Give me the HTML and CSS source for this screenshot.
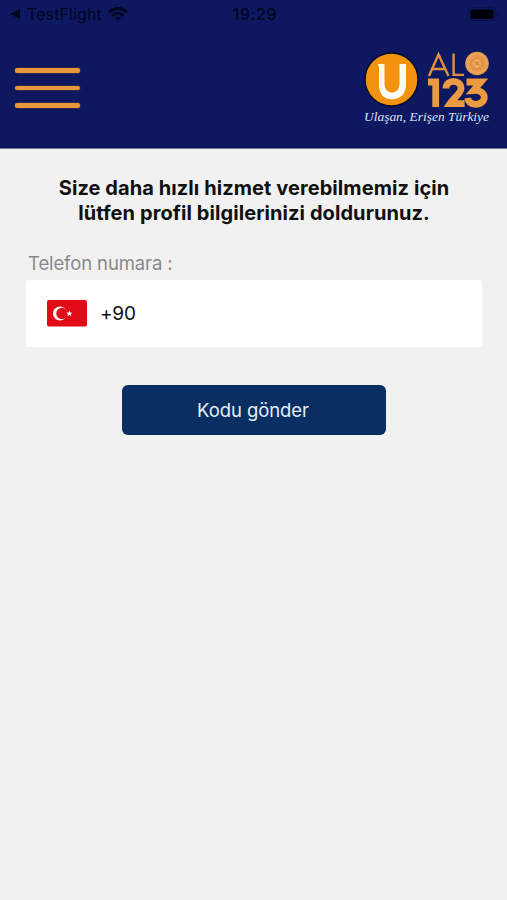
FILE: index.html
```html
<!DOCTYPE html>
<html lang="tr">
<head>
<meta charset="utf-8">
<meta name="viewport" content="width=device-width">
<title>Alo 123</title>
<link rel="stylesheet" href="styles.css">
</head>
<body>
<header class="header">
  <div class="status">
    <div class="status-left">
      <svg width="11" height="10" viewBox="0 0 11 10"><path d="M0 5 10 0v10z" fill="#02051f"/></svg>
      <span class="back">TestFlight</span>
      <svg class="wifi" width="20" height="14" viewBox="0 0 20 14" fill="none" stroke="#02051f" stroke-width="2.8"><path d="M1 5.2Q10-2.7 19 5.2M4.2 8.6q5.8-5 11.6 0"/><path d="M10 13.8 6.8 10.9q3.2-2.5 6.4 0z" fill="#02051f" stroke="none"/></svg>
    </div>
    <span class="time">19:29</span>
    <svg class="battery" width="32" height="15" viewBox="0 0 32 15"><rect x=".7" y=".7" width="27" height="13" rx="4" fill="none" stroke="#0a1144"/><rect x="2.5" y="2.5" width="23" height="9.5" rx="2" fill="#010207"/><path d="M29.5 5q2 2 0 4z" fill="#0a1144"/></svg>
  </div>
  <div class="bar">
    <div class="menu"><i></i><i></i><i></i></div>
    <svg class="logo" width="134" height="80" viewBox="360 48 134 80">
      <circle cx="391.5" cy="79.5" r="26.5" fill="#f2920f" stroke="#0b0b25" stroke-width="1.5"/>
      <path d="M377.5 64H384.5V84.5A7.5 8.3 0 0 0 399.5 84.5V64H406V84.5C406 94 400.5 99.3 392 99.3S379 94 379 84.5V66.5Z" fill="#fffdf5"/>
      <g fill="none" stroke="#df913f" stroke-width="2.4"><path d="M429 76 438.5 54.5 448.5 76M432.5 69h12.5M453.6 53.5v21.4H464"/></g>
      <circle cx="477" cy="63.5" r="11.8" fill="#e79a4c"/>
      <g fill="none" stroke="#f5bd7d"><circle cx="477" cy="63.5" r="9.4" stroke-width="1" stroke-dasharray="1.5 1"/><circle cx="477" cy="63.5" r="6" stroke="#d98a40"/><circle cx="477" cy="63.5" r="3.2"/></g>
      <path d="m474 61.5 6 4m-5.5.5 5-5" stroke="#ca7932" stroke-width=".8"/>
      <g fill="none" stroke="#ec9a40" stroke-width="6.8"><path d="M428 82h7.7v25"/><path d="M446 88.5c0-9.5 15-9.5 15 0 0 4.5-6.5 8.5-11 15.2h14.6"/><path d="M466.5 82h14.3l-7.3 8.5c14.5-1 13.5 13.8 2 13.8-4.5 0-7.2-2.3-7.8-6.2"/></g>
      <text class="slogan" x="364" y="121" textLength="125" lengthAdjust="spacingAndGlyphs">Ulaşan, Erişen Türkiye</text>
    </svg>
  </div>
</header>
<main class="content">
  <h1>Size daha hızlı hizmet verebilmemiz için<br>lütfen profil bilgilerinizi doldurunuz.</h1>
  <div class="label">Telefon numara :</div>
  <div class="field">
    <svg width="40" height="27" viewBox="0 0 40 27"><rect width="40" height="26.5" rx="2" fill="#e30a17"/><circle cx="13" cy="13.5" r="7" fill="#fff"/><circle cx="15" cy="13.5" r="5.7" fill="#e30a17"/><path d="m22.3 10.5.9 2 2.2.2-1.7 1.4.6 2.2-2-1.2-1.9 1.2.5-2.2-1.7-1.4 2.3-.2z" fill="#fff"/></svg>
    <span class="code">+90</span>
  </div>
  <button class="send">Kodu gönder</button>
</main>
</body>
</html>
```
FILE: styles.css
```css
* { box-sizing: border-box; }
body { margin: 0; min-height: 900px; background: #f1f1f1; font-family: Inter, "Liberation Sans", sans-serif; color: #101010; }
svg { display: block; flex: none; }
.header { height: 149px; background: #0d1861; border-bottom: 1px solid #727899; }
.status { height: 28px; display: grid; grid-template-columns: 1fr auto 1fr; align-items: center; padding: 0 7px 0 10px; color: #02051f; font-size: 16px; }
.status-left { display: flex; align-items: center; }
.back { margin-left: 6px; letter-spacing: .1px; }
.wifi { margin-left: 6px; }
.time { font-weight: 500; letter-spacing: .6px; }
.battery { justify-self: end; }
.bar { display: flex; justify-content: space-between; padding: 20px 13px 0 15px; }
.menu { width: 65px; padding-top: 20px; display: flex; flex-direction: column; gap: 13px; }
.menu i { height: 4.5px; border-radius: 2px; background: #e8973e; box-shadow: 0 0 1px 0.5px #553237; }
.slogan { font: italic 12px "Liberation Serif", serif; fill: #dfe2f5; }
.content { padding: 27px 25px 0 26px; display: flex; flex-direction: column; }
h1 { margin: 0; text-align: center; font-size: 20px; line-height: 24.5px; font-weight: 700; letter-spacing: .08px; white-space: nowrap; }
.label { margin: 27px 0 0 2px; height: 28px; line-height: 22px; font-size: 18.5px; letter-spacing: -.12px; color: #898989; }
.field { height: 67px; background: #fff; border-radius: 3px; display: flex; align-items: center; padding-left: 21px; gap: 13px; }
.code { font-size: 19px; letter-spacing: -.2px; }
.send { margin: 38px 0 0 96px; padding: 0 2px 0 0; width: 264px; height: 50px; border: 0; border-radius: 6px; background: #092e62; color: #e4effb; font: 18.5px Inter, sans-serif; letter-spacing: -.08px; }
```
